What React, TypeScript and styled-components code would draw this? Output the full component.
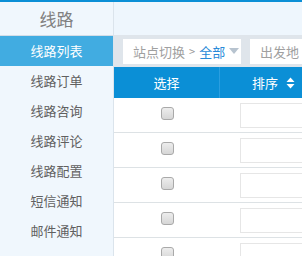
import React from 'react'
import styled, { createGlobalStyle } from 'styled-components'

const GlobalStyle = createGlobalStyle`
  html, body {
    margin: 0;
    padding: 0;
    overflow: hidden;
    background: #ffffff;
    font-family: "Noto Sans CJK SC", "Noto Sans", sans-serif;
  }
`

const Page = styled.div`
  width: 302px;
  height: 256px;
  display: flex;
  flex-direction: column;
  overflow: hidden;
`

const TopStripe = styled.div`
  height: 2px;
  background: #0b8fd6;
  flex-shrink: 0;
`

const Body = styled.div`
  display: flex;
  flex: 1;
  min-height: 0;
`

const Sidebar = styled.div`
  width: 113px;
  flex-shrink: 0;
  background: #f0f7fd;
  border-right: 1px solid #dbe4ec;
  display: flex;
  flex-direction: column;
`

const SidebarTitle = styled.div`
  height: 33px;
  line-height: 33px;
  text-align: center;
  font-size: 17px;
  color: #808080;
  border-bottom: 1px solid #d3dde7;
`

const NavItem = styled.div<{ active?: boolean }>`
  height: 30px;
  line-height: 30px;
  text-align: center;
  font-size: 13px;
  color: ${p => (p.active ? '#fff' : '#606060')};
  background: ${p => (p.active ? '#41ace1' : 'transparent')};
`

const Main = styled.div`
  flex: 1;
  display: flex;
  flex-direction: column;
  min-width: 0;
`

const HeaderBand = styled.div`
  height: 33px;
  background: #eef6fd;
  flex-shrink: 0;
`

const FilterBar = styled.div`
  height: 32px;
  background: #dfe5eb;
  display: flex;
  align-items: center;
  gap: 9px;
  padding-left: 9px;
  flex-shrink: 0;
`

const FilterBox = styled.div<{ width: number }>`
  width: ${p => p.width}px;
  flex-shrink: 0;
  height: 25px;
  background: #fff;
  display: flex;
  align-items: center;
  padding-left: 10px;
  box-sizing: border-box;
  font-size: 13px;
  color: #a0a0a0;
  white-space: nowrap;
`

const Arrow = styled.span`
  margin: 0 4px;
  font-size: 11px;
  color: #999;
`

const Current = styled.span`
  color: #2a8ad8;
`

const Caret = styled.span`
  margin-left: 4px;
  width: 0;
  height: 0;
  border-left: 5px solid transparent;
  border-right: 5px solid transparent;
  border-top: 6px solid #b7c3cf;
`

const Table = styled.div`
  display: flex;
  flex-direction: column;
`

const HeadRow = styled.div`
  height: 31px;
  background: #0b8fd6;
  display: flex;
  color: #fff;
  font-size: 13px;
`

const HeadCell = styled.div<{ width?: number }>`
  width: ${p => (p.width ? `${p.width}px` : 'auto')};
  flex: ${p => (p.width ? 'none' : '1')};
  display: flex;
  align-items: center;
  gap: 8px;
  border-right: ${p => (p.width ? '1px solid #2a9ee0' : 'none')};
  box-sizing: border-box;
  padding-left: ${p => (p.width ? '0' : '32px')};
  justify-content: ${p => (p.width ? 'center' : 'flex-start')};
`

const Row = styled.div`
  height: 35px;
  display: flex;
  border-bottom: 1px solid #dde2e5;
  box-sizing: border-box;
`

const CheckCell = styled.div`
  width: 106px;
  flex-shrink: 0;
  display: flex;
  align-items: center;
  justify-content: center;
  padding-bottom: 3px;
  box-sizing: border-box;
`

const Checkbox = styled.span`
  width: 11px;
  height: 11px;
  border: 1px solid #a9a9a9;
  border-radius: 3px;
  background: linear-gradient(#ededed, #d6d6d6);
`

const InputCell = styled.div`
  flex: 1;
  display: flex;
  align-items: center;
  padding-left: 20px;
`

const SortInput = styled.div`
  width: 80px;
  height: 25px;
  border: 1px solid #e6e6e6;
  box-sizing: border-box;
  background: #fff;
`

const SortIcon = () => (
  <svg width="9" height="12" viewBox="0 0 9 12">
    <path d="M4.5 0.5 L8.5 5 L0.5 5 Z" fill="#fff" />
    <path d="M0.5 7 L8.5 7 L4.5 11.5 Z" fill="#fff" />
  </svg>
)

const navItems = ['线路列表', '线路订单', '线路咨询', '线路评论', '线路配置', '短信通知', '邮件通知']

const App: React.FC = () => {
  return (
    <Page>
      <GlobalStyle />
      <TopStripe />
      <Body>
        <Sidebar>
          <SidebarTitle>线路</SidebarTitle>
          {navItems.map((item, i) => (
            <NavItem key={item} active={i === 0}>{item}</NavItem>
          ))}
        </Sidebar>
        <Main>
          <HeaderBand />
          <FilterBar>
            <FilterBox width={118}>
              站点切换<Arrow>&gt;</Arrow><Current>全部</Current><Caret />
            </FilterBox>
            <FilterBox width={80}>出发地</FilterBox>
          </FilterBar>
          <Table>
            <HeadRow>
              <HeadCell width={106}>选择</HeadCell>
              <HeadCell>排序<SortIcon /></HeadCell>
            </HeadRow>
            {[0, 1, 2, 3, 4].map(i => (
              <Row key={i}>
                <CheckCell><Checkbox /></CheckCell>
                <InputCell><SortInput /></InputCell>
              </Row>
            ))}
          </Table>
        </Main>
      </Body>
    </Page>
  )
}

export default App
